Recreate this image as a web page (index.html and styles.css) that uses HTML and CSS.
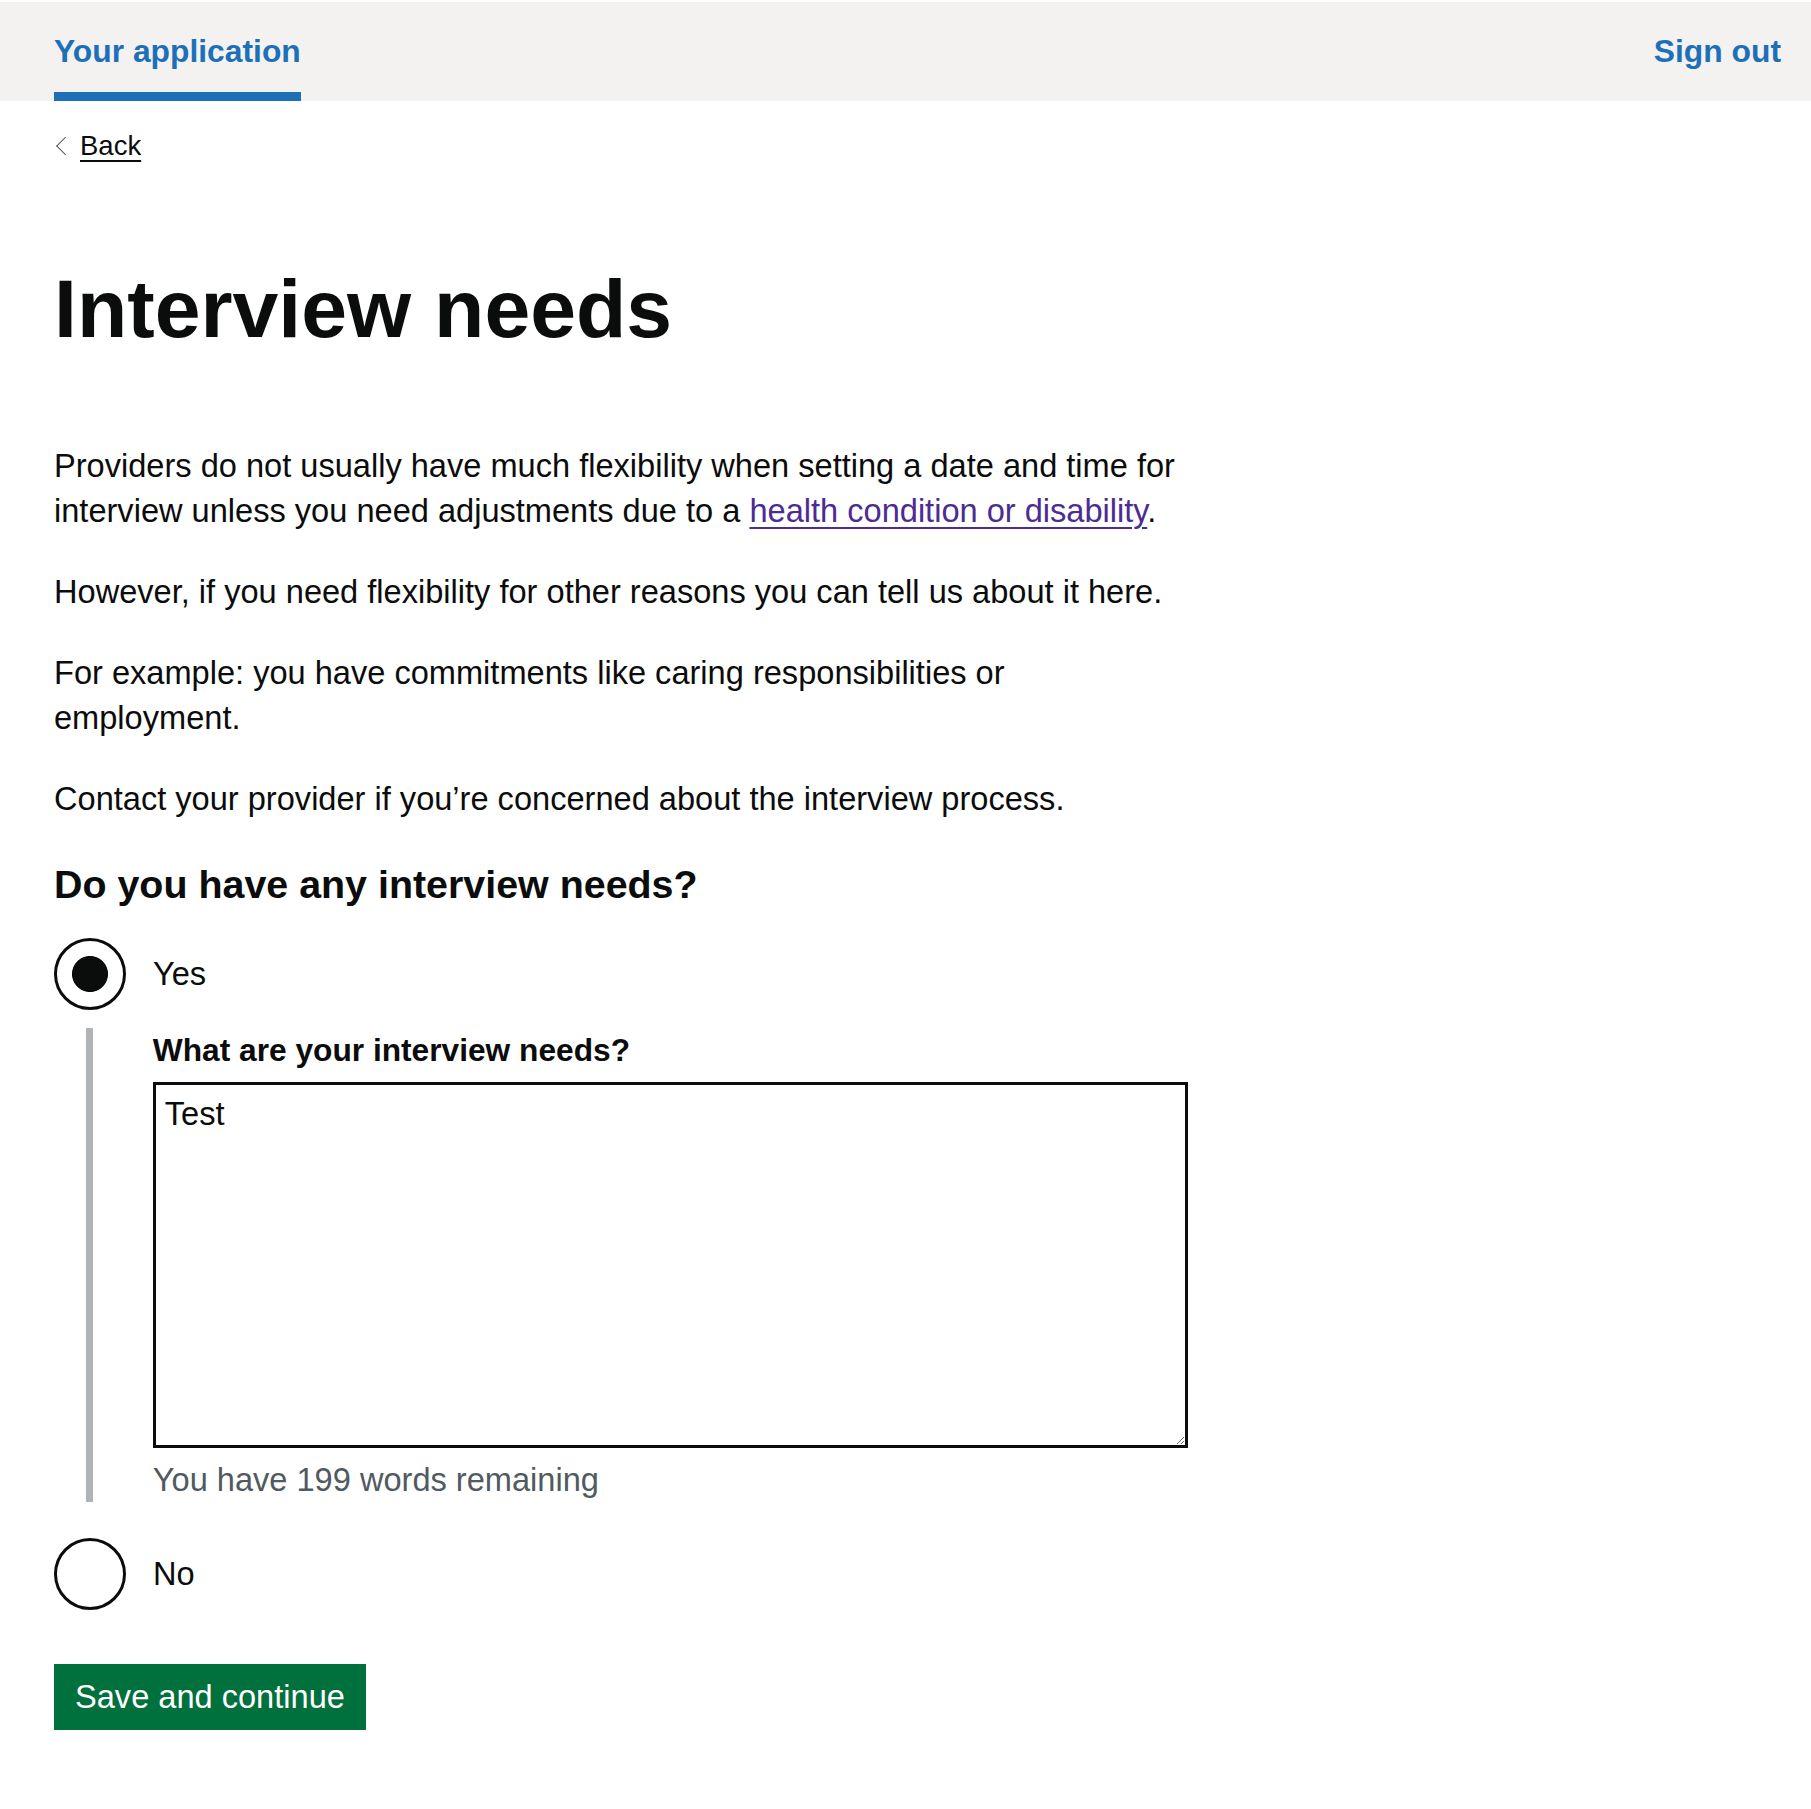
FILE: index.html
```html
<!DOCTYPE html>
<html lang="en">
<head>
<meta charset="utf-8">
<title>Interview needs</title>
<link rel="stylesheet" href="styles.css">
</head>
<body>
<header class="service-nav">
  <nav class="service-nav__inner">
    <ul class="service-nav__list">
      <li class="service-nav__item service-nav__item--active"><a class="service-nav__link" href="#">Your application</a></li>
    </ul>
    <a class="service-nav__link service-nav__signout" href="#">Sign out</a>
  </nav>
</header>
<div class="container">
  <a class="back-link" href="#">Back</a>
  <main class="main">
    <div class="column">
      <h1 class="heading-xl">Interview needs</h1>
      <p class="body">Providers do not usually have much flexibility when setting a date and time for interview unless you need adjustments due to a <a class="link link--visited" href="#">health condition or disability</a>.</p>
      <p class="body">However, if you need flexibility for other reasons you can tell us about it here.</p>
      <p class="body">For example: you have commitments like caring responsibilities or employment.</p>
      <p class="body">Contact your provider if you’re concerned about the interview process.</p>
      <form class="form" action="#">
        <div class="form-group">
          <fieldset class="fieldset">
            <legend class="legend">Do you have any interview needs?</legend>
            <div class="radios">
              <div class="radios__item">
                <input class="radios__input" type="radio" id="needs-yes" name="needs" checked>
                <label class="radios__label" for="needs-yes">Yes</label>
              </div>
              <div class="radios__conditional">
                <label class="label" for="needs-text">What are your interview needs?</label>
                <textarea class="textarea" id="needs-text" rows="8">Test</textarea>
                <div class="char-count">You have 199 words remaining</div>
              </div>
              <div class="radios__item">
                <input class="radios__input" type="radio" id="needs-no" name="needs">
                <label class="radios__label" for="needs-no">No</label>
              </div>
            </div>
          </fieldset>
        </div>
        <button class="button" type="submit">Save and continue</button>
      </form>
    </div>
  </main>
</div>
</body>
</html>
```

FILE: styles.css
```css
html {
  background: #ffffff;
}

body {
  margin: 0;
  padding-top: 2px;
  font-family: "Liberation Sans", Arial, sans-serif;
  color: #0b0c0c;
  background: #ffffff;
}

/* Service navigation */
.service-nav {
  background: #f3f2f1;
}

.service-nav__inner {
  display: flex;
  justify-content: space-between;
  align-items: flex-start;
  padding: 0 30px 0 54px;
}

.service-nav__list {
  list-style: none;
  margin: 0;
  padding: 0;
  display: flex;
}

.service-nav__item {
  padding: 27px 0 27px;
}

.service-nav__item--active {
  padding-bottom: 18px;
  border-bottom: 9px solid #1d70b8;
}

.service-nav__link {
  font-size: 31.8px;
  line-height: 45px;
  font-weight: 700;
  color: #1d70b8;
  text-decoration: none;
}

.service-nav__signout {
  display: block;
  padding: 27px 0;
}

/* Layout */
.container {
  padding: 0 54px;
}

.back-link {
  display: inline-block;
  position: relative;
  margin-top: 27px;
  margin-bottom: 27px;
  padding-left: 26px;
  font-size: 27.5px;
  line-height: 36px;
  color: #0b0c0c;
  text-decoration: underline;
  text-decoration-thickness: 1.8px;
  text-underline-offset: 4.5px;
}

.back-link::before {
  content: "";
  position: absolute;
  top: 0;
  bottom: 0;
  left: 5.4px;
  width: 12.6px;
  height: 12.6px;
  margin: auto;
  border-style: solid;
  border-color: #505a5f;
  border-width: 1.8px 1.8px 0 0;
  box-sizing: border-box;
  transform: rotate(225deg);
}

.main {
  padding-top: 72px;
}

.column {
  max-width: 1134px;
}

.heading-xl {
  margin: 0 0 90px;
  font-size: 82.4px;
  line-height: 90px;
  font-weight: 700;
}

.body {
  margin: 0 0 36px;
  font-size: 32.6px;
  line-height: 45px;
}

.link {
  color: #1d70b8;
  text-decoration: underline;
  text-decoration-thickness: 1.8px;
  text-underline-offset: 5px;
}

.link--visited {
  color: #4c2c92;
}

/* Form */
.form {
  margin: 0;
}

.form-group {
  margin-bottom: 54px;
}

.fieldset {
  margin: 0;
  padding: 0;
  border: 0;
  min-width: 0;
}

.legend {
  padding: 0;
  margin-bottom: 27px;
  font-size: 39.4px;
  line-height: 54px;
  font-weight: 700;
}

.radios__item {
  display: flex;
  align-items: flex-start;
  margin-bottom: 18px;
}

.radios__item:last-child {
  margin-bottom: 0;
}

.radios__input {
  appearance: none;
  -webkit-appearance: none;
  flex: none;
  width: 72px;
  height: 72px;
  margin: 0;
  border: 3.6px solid #0b0c0c;
  border-radius: 50%;
  box-sizing: border-box;
  background: #ffffff;
}

.radios__input:checked {
  background: radial-gradient(circle, #0b0c0c 0, #0b0c0c 17.6px, #ffffff 18.4px);
}

.radios__label {
  padding: 12.6px 27px 9px;
  font-size: 32.6px;
  line-height: 45px;
}

.radios__conditional {
  margin-left: 32.4px;
  margin-bottom: 36px;
  padding-left: 59.4px;
  border-left: 7.2px solid #b1b4b6;
}

.label {
  display: block;
  margin-bottom: 9px;
  font-size: 31.7px;
  line-height: 45px;
  font-weight: 700;
}

.textarea {
  display: block;
  box-sizing: border-box;
  width: 100%;
  height: 366px;
  margin: 0 0 9px;
  padding: 9px;
  border: 3.4px solid #0b0c0c;
  border-radius: 0;
  font-family: "Liberation Sans", Arial, sans-serif;
  font-size: 32.6px;
  line-height: 1.25;
  color: #0b0c0c;
  resize: vertical;
}

.char-count {
  font-size: 32.6px;
  line-height: 45px;
  color: #505a5f;
}

.button {
  display: inline-block;
  margin: 0;
  padding: 14.4px 18px 12.6px;
  border: 3.6px solid transparent;
  border-radius: 0;
  background: #00703c;
  box-shadow: 0 3.6px 0 #002d18;
  color: #ffffff;
  font-family: "Liberation Sans", Arial, sans-serif;
  font-size: 32.6px;
  line-height: 32.6px;
  cursor: pointer;
}
```
